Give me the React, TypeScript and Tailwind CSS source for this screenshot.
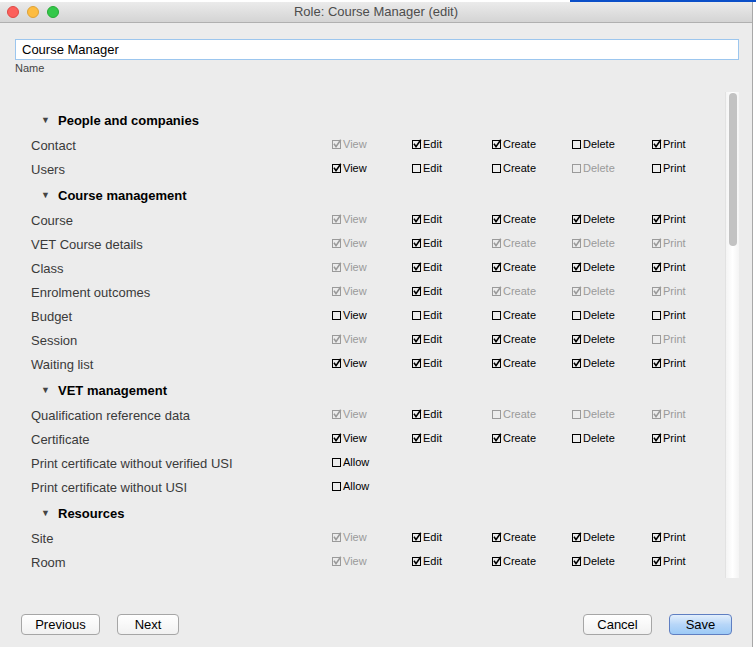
import React from "react";

type Perm = { on: boolean; dis?: boolean } | null;

type Row = { label: string; cells: Perm[]; kind?: "allow" };
type Group = { title: string; rows: Row[] };

const c = (on: boolean, dis = false): Perm => ({ on, dis });

const groups: Group[] = [
  {
    title: "People and companies",
    rows: [
      { label: "Contact", cells: [c(true, true), c(true), c(true), c(false), c(true)] },
      { label: "Users", cells: [c(true), c(false), c(false), c(false, true), c(false)] },
    ],
  },
  {
    title: "Course management",
    rows: [
      { label: "Course", cells: [c(true, true), c(true), c(true), c(true), c(true)] },
      { label: "VET Course details", cells: [c(true, true), c(true), c(true, true), c(true, true), c(true, true)] },
      { label: "Class", cells: [c(true, true), c(true), c(true), c(true), c(true)] },
      { label: "Enrolment outcomes", cells: [c(true, true), c(true), c(true, true), c(true, true), c(true, true)] },
      { label: "Budget", cells: [c(false), c(false), c(false), c(false), c(false)] },
      { label: "Session", cells: [c(true, true), c(true), c(true), c(true), c(false, true)] },
      { label: "Waiting list", cells: [c(true), c(true), c(true), c(true), c(true)] },
    ],
  },
  {
    title: "VET management",
    rows: [
      { label: "Qualification reference data", cells: [c(true, true), c(true), c(false, true), c(false, true), c(true, true)] },
      { label: "Certificate", cells: [c(true), c(true), c(true), c(false), c(true)] },
      { label: "Print certificate without verified USI", cells: [c(false)], kind: "allow" },
      { label: "Print certificate without USI", cells: [c(false)], kind: "allow" },
    ],
  },
  {
    title: "Resources",
    rows: [
      { label: "Site", cells: [c(true, true), c(true), c(true), c(true), c(true)] },
      { label: "Room", cells: [c(true, true), c(true), c(true), c(true), c(true)] },
    ],
  },
];

const names = ["View", "Edit", "Create", "Delete", "Print"];

function CheckBox({ on, dis, text }: { on: boolean; dis?: boolean; text: string }) {
  const col = dis ? "#9a9a9a" : "#000000";
  return (
    <div className={`flex shrink-0 items-center gap-[1px] w-[80px] mb-[3px] text-[11px] ${dis ? "text-[#9a9a9a]" : "text-black"}`}>
      <svg width="10" height="11" viewBox="0 0 10 11" className="shrink-0">
        <rect x="0.5" y="1.5" width="8" height="8" fill="none" stroke={col} strokeWidth="1" />
        {on && (
          <path d="M2 4.8 L4 7.6 L8.8 0.8" fill="none" stroke={col} strokeWidth="1.6" />
        )}
      </svg>
      <span>{text}</span>
    </div>
  );
}

function Btn({ label, primary, w }: { label: string; primary?: boolean; w: string }) {
  return (
    <button
      className={`${w} h-[21px] rounded-[4px] border text-[13px] text-black ${
        primary
          ? "border-[#5f7fc2] bg-gradient-to-b from-[#e3effc] via-[#b7d6f8] to-[#9ccaf6]"
          : "border-[#a6a6a6] bg-gradient-to-b from-white to-[#f1f1f1]"
      }`}
    >
      {label}
    </button>
  );
}

export default function App() {
  return (
    <div
      className="w-[756px] h-[647px] overflow-hidden bg-white relative"
      style={{ fontFamily: '"Liberation Sans", Arial, sans-serif' }}
    >
      <div className="h-[2px] flex">
        <div className="flex-1 bg-white" />
        <div className="w-[186px] bg-[#0b4fc8]" />
      </div>
      <div className="w-[753px] h-[645px] bg-[#ececec] border-r border-[#a8a8a8] flex flex-col">
        {/* title bar */}
        <div className="h-[21px] shrink-0 relative flex items-center justify-center bg-gradient-to-b from-[#ebebeb] to-[#d4d4d4] border-b border-[#b0b0b0] rounded-t-[4px]">
          <div className="absolute left-[7px] top-[4px] flex gap-[8px]">
            <span className="w-[12px] h-[12px] rounded-full bg-[#fc605c] border border-[#de4a45]" />
            <span className="w-[12px] h-[12px] rounded-full bg-[#fdbc40] border border-[#dea236]" />
            <span className="w-[12px] h-[12px] rounded-full bg-[#34c84a] border border-[#27aa35]" />
          </div>
          <span className="text-[13px] text-[#4d4d4d]">Role: Course Manager (edit)</span>
        </div>

        <div className="px-[15px] pt-[16px] flex flex-col flex-1">
          <div className="h-[21px] w-[724px] bg-white border border-[#9cc6ee] flex items-center pl-[6px] text-[13px] text-black">
            Course Manager
          </div>
          <div className="text-[11px] text-[#444] mt-[1px] leading-[14px]">Name</div>

          {/* scroll area */}
          <div className="mt-[17px] h-[486px] w-[724px] flex overflow-hidden">
            <div className="flex-1 overflow-hidden pl-[16px] pt-[15px]">
              {groups.map((g) => (
                <div key={g.title}>
                  <div className="h-[27px] flex items-center pl-[10px] gap-[9px]">
                    <span className="text-[9px] text-[#444] w-[8px]">▼</span>
                    <span className="text-[13px] font-bold text-black">{g.title}</span>
                  </div>
                  {g.rows.map((r) => (
                    <div key={r.label} className="h-[24px] flex items-center">
                      <div className="w-[301px] shrink-0 text-[13px] text-[#3a3a3a]">{r.label}</div>
                      {r.cells.map((p, i) =>
                        p ? (
                          <CheckBox
                            key={i}
                            on={p.on}
                            dis={p.dis}
                            text={r.kind === "allow" ? "Allow" : names[i]}
                          />
                        ) : null
                      )}
                    </div>
                  ))}
                </div>
              ))}
            </div>
            <div className="w-[14px] shrink-0 h-full bg-gradient-to-r from-[#f4f4f4] via-white to-[#f4f4f4] border-l border-[#e2e2e2] pt-[1px] flex justify-center">
              <div className="w-[8px] h-[153px] rounded-full bg-[#c2c2c2]" />
            </div>
          </div>

          <div className="mt-[36px] flex items-center pl-[6px] pr-[5px]">
            <Btn label="Previous" w="w-[79px]" />
            <div className="w-[17px]" />
            <Btn label="Next" w="w-[62px]" />
            <div className="flex-1" />
            <Btn label="Cancel" w="w-[69px]" />
            <div className="w-[17px]" />
            <Btn label="Save" primary w="w-[63px]" />
          </div>
        </div>
      </div>
    </div>
  );
}
